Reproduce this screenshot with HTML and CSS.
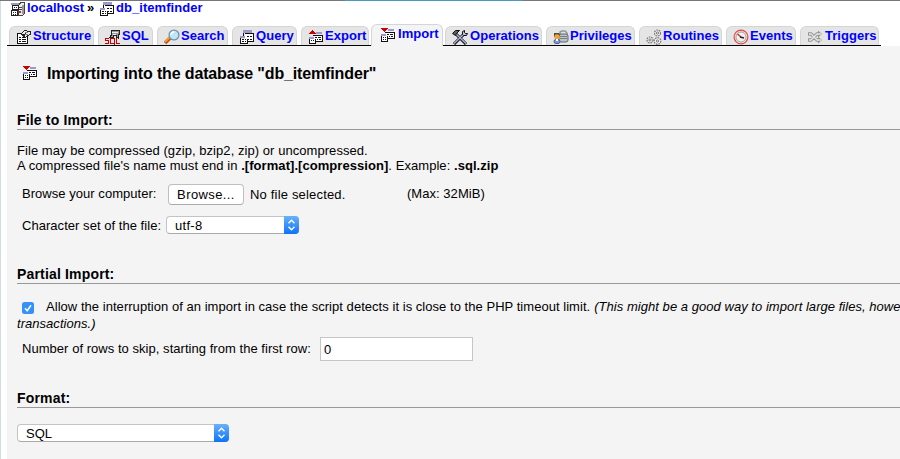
FILE: index.html
```html
<!DOCTYPE html>
<html lang="en">
<head>
<meta charset="utf-8">
<title>phpMyAdmin</title>
<link rel="stylesheet" href="styles.css">
</head>
<body>
<svg class="defs" width="0" height="0">
  <symbol id="tables" viewBox="0 0 16 16">
    <path fill="#99c" d="M4 1h9v3H4zM1 7h7v2H1z"/>
    <path fill="#fff" d="M6 5h9v8H6zM2 10h7v5H2z"/>
    <path fill="#111" d="M4 4h1v3H4zM6 4h9v1H6zM14 5h1v8h-1zM9 12h5v1H9zM8 7h2v1H8zM11 7h2v1h-2zM8 10h2v1H8zM11 10h2v1h-2zM1 9h1v6H1zM2 14h7v1H2zM8 10h1v4H8zM3 10h2v1H3zM6 10h1v1H6zM3 12h2v1H3zM6 12h1v1H6z"/>
  </symbol>
  <symbol id="import" viewBox="0 0 16 16">
    <path fill="#99c" d="M8 2h6v2H8zM1 7h5v2H1z"/>
    <path fill="#fff" d="M6 5h9v7H6zM2 9h6v5H2z"/>
    <path fill="#111" d="M5 5h10v1H5zM14 6h1v6h-1zM8 11h6v1H8zM7 7h2v1H7zM10 7h3v1h-3zM9 9h1v1H9zM11 9h2v1h-2zM1 9h1v6H1zM2 14h6v1H2zM7 9h1v5H7zM3 10h1v1H3zM5 10h1v1H5zM3 12h1v1H3zM5 12h1v1H5z"/>
    <path fill="#c00" d="M1 1h7v1H7v1H6v1H5v1H4V4H3V3H2V2H1z"/>
  </symbol>
  <symbol id="export" viewBox="0 0 16 16">
    <path fill="#99c" d="M8 3h6v2H8zM1 8h5v2H1z"/>
    <path fill="#fff" d="M6 6h9v7H6zM2 10h6v5H2z"/>
    <path fill="#111" d="M5 6h10v1H5zM14 7h1v6h-1zM8 12h6v1H8zM7 8h2v1H7zM10 8h3v1h-3zM9 10h1v1H9zM11 10h2v1h-2zM1 10h1v5H1zM2 14h6v1H2zM7 10h1v4H7zM3 11h1v1H3zM5 11h1v1H5z"/>
    <path fill="#c00" d="M4 1h1v1h1v1h1v1h1v1H1V4h1V3h1V2h1z"/>
  </symbol>
  <symbol id="server" viewBox="0 0 16 16">
    <path fill="#eee" stroke="#444" d="M9.500 2.500l2-1h3v11l-2 2h-4v-10z"/>
    <path fill="#999" d="M12 4h2v9h-2z"/>
    <path stroke="#444" d="M9 6.500h3M9 8.500h3"/>
    <path fill="#d22" d="M9 10h2v2H9z"/>
    <path fill="#99c" d="M1 2h8v2H1z"/>
    <path fill="#fff" stroke="#222" d="M2.500 4.500h6v4h-6zM1.500 9.500h6v5h-6z"/>
    <path stroke="#222" d="M4 6.500h1M6 6.500h1M3 11.500h1M5 11.500h1M3 13.500h1M5 13.500h1"/>
  </symbol>
  <symbol id="structure" viewBox="0 0 16 16">
    <path fill="#fff" stroke="#111" d="M1.500 4.500h10v10h-10z"/>
    <path stroke="#111" d="M3 8.500h2M6 8.500h4M3 10.500h2M6 10.500h4M3 12.500h2M6 12.500h4"/>
    <path fill="#eee" stroke="#222" d="M5.500 4.500l3-3h2l1 1h3v3l-3 1-2 2-2-1 1-2-2 1z"/>
    <path stroke="#888" d="M9 3.500h3M9 5.500h3"/>
  </symbol>
  <symbol id="sql" viewBox="0 0 16 16">
    <path fill="#999" stroke="#222" d="M6.500 1.500h8v4h-1v3h-2v-2h-3v2h-3v-2h1z"/>
    <path fill="none" stroke="#eee" d="M7 3.500h6M8 5.500h3"/>
    <path fill="none" stroke="#222" d="M11.500 8v3M13.500 7v3M4 8.500h2"/>
    <path fill="none" stroke="#c00" d="M4 9.500H.5v2h3v3H0M9.500 15.500v-6h-4v5h4M11.500 9v5.500H15"/>
  </symbol>
  <symbol id="search" viewBox="0 0 16 16">
    <path stroke="#b54d10" stroke-width="3.500" d="M1 14l5-5"/>
    <path stroke="#f99a31" stroke-width="2" d="M1 13l5-5"/>
    <circle cx="10" cy="6" r="4.900" fill="#bce7fa" stroke="#7791ac" stroke-width="1.300"/>
    <path fill="none" stroke="#fff" stroke-width="1.500" d="M7 6q0-3 3-3"/>
  </symbol>
  <symbol id="tools" viewBox="0 0 16 16">
    <path stroke="#111" stroke-width="3" d="M3 4l11 11M13 4L2 15"/>
    <path stroke="#aab3da" stroke-width="1.400" d="M4 5l10 9.500M12 5L2 14.500"/>
    <path fill="#596056" stroke="#111" d="M.5 4.500l3-3h4l-3 3-1 2z"/>
    <path fill="#bcc2de" stroke="#111" d="M10.500 5.500v-3l2-1v2l1 1h2l-1 2h-3z"/>
  </symbol>
  <symbol id="privileges" viewBox="0 0 16 16">
    <path fill="none" stroke="#8f969b" stroke-width="1.500" d="M7 6V3l2-1h3l2 2v3"/>
    <rect x="6" y="5" width="9" height="8" rx="2" fill="#b9c4ca" stroke="#5d666b"/>
    <path stroke="#778187" d="M7 7.500h7M7 9.500h7"/>
    <path fill="#4b4949" d="M1 4h5l1 2-1 2H1z"/>
    <circle cx="4" cy="8" r="2.700" fill="#f7a32a"/>
    <rect x="1" y="10.500" width="6" height="4" rx="2" fill="#7d9adf" stroke="#4963a2"/>
    <path fill="#fff" d="M3 10h2v2H3z"/>
  </symbol>
  <symbol id="routines" viewBox="0 0 16 16">
    <g fill="#eee" stroke="#777" stroke-width="1.200" stroke-dasharray="1.700 .8">
      <circle cx="11.500" cy="4" r="3"/><circle cx="4" cy="11" r="3"/><circle cx="11.500" cy="12" r="3.300"/>
    </g>
    <g fill="#fff" stroke="#777"><circle cx="11.500" cy="4" r="1.100"/><circle cx="4" cy="11" r="1.100"/><circle cx="11.500" cy="12" r="1.100"/></g>
  </symbol>
  <symbol id="events" viewBox="0 0 16 16">
    <circle cx="8" cy="8" r="6.900" fill="#f7dede" stroke="#e14a4a" stroke-width="1.200"/>
    <circle cx="8" cy="8" r="5" fill="#eef1ee" stroke="#a3a3a3"/>
    <path stroke="#c33" stroke-width="1.500" d="M4.500 5L8 8"/>
    <path stroke="#222" stroke-width="1.700" d="M7 8l4 1"/>
  </symbol>
  <symbol id="triggers" viewBox="0 0 16 16">
    <path fill="none" stroke="#929692" stroke-width="3.300" d="M1 5h3l6 6h3M1 11h3l6-6h3"/>
    <path fill="#929692" d="M11 1.500l4 3.500-4 3.500zM11 7.500l4 3.500-4 3.500z"/>
    <path fill="none" stroke="#e5e7e5" stroke-width="1.300" d="M2 5h2l6 6h4M2 11h2l6-6h4"/>
  </symbol>
  <symbol id="arrows" viewBox="0 0 15 18">
    <path fill="none" stroke="#fff" stroke-width="1.400" d="M4.500 7.300l3-3 3 3M4.500 10.700l3 3 3-3"/>
  </symbol>
</svg>
<div class="strip"><div class="strip-active"></div></div>
<div class="frame">
  <nav class="crumbs">
    <a class="crumb"><svg class="icon crisp"><use href="#server"/></svg><span class="c-host">localhost</span></a>
    <span class="sep">»</span>
    <a class="crumb"><svg class="icon crisp"><use href="#tables"/></svg><span class="c-db">db_itemfinder</span></a>
  </nav>
  <ul class="tabs">
    <li class="tab structure"><svg class="icon crisp"><use href="#structure"/></svg><a>Structure</a></li>
    <li class="tab sql"><svg class="icon crisp"><use href="#sql"/></svg><a>SQL</a></li>
    <li class="tab search"><svg class="icon"><use href="#search"/></svg><a>Search</a></li>
    <li class="tab query"><svg class="icon crisp"><use href="#tables"/></svg><a>Query</a></li>
    <li class="tab export"><svg class="icon crisp"><use href="#export"/></svg><a>Export</a></li>
    <li class="tab import active"><svg class="icon crisp"><use href="#import"/></svg><a>Import</a></li>
    <li class="tab operations"><svg class="icon"><use href="#tools"/></svg><a>Operations</a></li>
    <li class="tab privileges"><svg class="icon"><use href="#privileges"/></svg><a>Privileges</a></li>
    <li class="tab routines"><svg class="icon"><use href="#routines"/></svg><a>Routines</a></li>
    <li class="tab events"><svg class="icon"><use href="#events"/></svg><a>Events</a></li>
    <li class="tab triggers"><svg class="icon"><use href="#triggers"/></svg><a>Triggers</a></li>
  </ul>
  <main class="content">
    <h1><svg class="icon crisp"><use href="#import"/></svg><span>Importing into the database "db_itemfinder"</span></h1>
    <section class="file">
      <h2>File to Import:</h2>
      <p class="info">File may be compressed (gzip, bzip2, zip) or uncompressed.<br>A compressed file's name must end in <b>.[format].[compression]</b>. Example: <b>.sql.zip</b></p>
      <div class="row browse"><label>Browse your computer:</label><button type="button">Browse...</button><span class="chosen">No file selected.</span><span class="max">(Max: 32MiB)</span></div>
      <div class="row charset"><label>Character set of the file:</label><div class="select small"><span>utf-8</span><svg><use href="#arrows"/></svg></div></div>
    </section>
    <section class="partial">
      <h2>Partial Import:</h2>
      <div class="allow"><svg class="check" viewBox="0 0 12 12"><path d="M3 6.200l2.200 2.500L9 3.300"/></svg><span class="a1">Allow the interruption of an import in case the script detects it is close to the PHP timeout limit.</span><em class="a2">(This might be a good way to import large files, howe</em></div>
      <em class="rest">transactions.)</em>
      <div class="row skip"><label>Number of rows to skip, starting from the first row:</label><input type="text" value="0"></div>
    </section>
    <section class="format">
      <h2>Format:</h2>
      <div class="select wide"><span>SQL</span><svg><use href="#arrows"/></svg></div>
    </section>
  </main>
</div>
</body>
</html>
```
FILE: styles.css
```css
* { box-sizing: border-box; }
body {
  margin: 0;
  height: 459px;
  overflow: hidden;
  background: #fff;
  color: #000;
  font: 13px/15px "Liberation Sans", Arial, sans-serif;
  letter-spacing: .04px;
  white-space: nowrap;
}
.defs { position: absolute; }
.strip { height: 1px; background: #777; }
.strip-active { width: 178px; height: 1px; margin-left: 345px; background: #4a9abe; }
.frame { height: 458px; padding-left: 6px; border-left: 1px solid #d2dce5; }
.icon { width: 16px; height: 16px; flex: none; }
.crisp { shape-rendering: crispEdges; }
.crumbs { display: flex; height: 25px; padding-left: 3px; font-weight: bold; line-height: 14px; }
.crumb { display: flex; color: #00f; }
.c-host { margin-left: 1px; letter-spacing: 0; }
.c-db { margin-left: 1px; }
.sep { width: 12px; margin: 0 0 0 3px; }
.tabs { display: flex; align-items: flex-end; width: 874px; height: 20px; margin: 0; padding: 0 0 0 2px; list-style: none; background: linear-gradient(#000, #000) 0 100% / 100% 1px no-repeat; }
.tab {
  display: flex;
  height: 19px;
  margin: 0 4px 1px 0;
  padding-left: 6px;
  border: 1px solid #d5d5d5;
  border-bottom: 0;
  border-radius: 6px 6px 0 0;
  background: #e5e5e5;
  color: #00f;
  font-weight: bold;
  line-height: 17px;
  flex: none;
}
.tab .icon { margin-top: 2px; }
.tab a { margin-left: 1px; }
.structure { width: 85px; }
.sql { width: 55px; }
.search { width: 71px; }
.query { width: 65px; }
.export { width: 68px; margin-right: 2px; }
.import { width: 72px; }
.operations { width: 97px; }
.privileges { width: 89px; }
.routines { width: 83px; }
.events { width: 70px; }
.triggers { width: 79px; margin-right: 0; }
.operations a, .import a, .triggers a { margin-left: 2px; }
.tab.active { height: 22px; margin: 0 2px 0 0; padding-left: 8px; background: #f4f4f4; line-height: 18px; }
.content { height: 413px; padding: 0 0 0 10px; background: #f4f4f4; overflow: hidden; }
h1 { display: flex; align-items: center; height: 18px; margin: 18px 0 0 5px; font-size: 16px; line-height: 18px; letter-spacing: -.14px; }
h1 .icon { margin-right: 9px; }
h1 span { margin-top: 2px; }
h2 { height: 18px; margin: 0; border-bottom: 1px solid #999; font-size: 14px; line-height: 16px; letter-spacing: .17px; }
.file { margin-top: 30px; height: 154px; }
.partial { height: 124px; }
.info { margin: 13px 0 0; letter-spacing: .055px; }
.row { display: flex; padding-left: 5px; }
.browse { height: 22px; margin-top: 10px; }
.browse label { width: 146px; margin-top: 3px; }
button { width: 76px; height: 21px; margin: 1px 0 0; padding: 0; border: 1px solid #bfbfbf; border-bottom-color: #aaa; border-radius: 4px; background: #fff; color: #000; font: 13px/19px "Liberation Sans", Arial, sans-serif; letter-spacing: .4px; }
.chosen { width: 157px; margin: 4px 0 0 6px; letter-spacing: .18px; }
.max { margin-top: 3px; }
.charset { margin-top: 11px; }
.charset label { width: 144px; margin-top: 2px; }
.select { display: flex; justify-content: space-between; height: 18px; border: 1px solid #c4c4c4; border-bottom-color: #aaa; border-right: 0; border-radius: 4px; background: #fff; line-height: 18px; padding-left: 8px; letter-spacing: .3px; }
.select svg { width: 15px; height: 18px; margin-top: -1px; border-radius: 0 4px 4px 0; background: linear-gradient(#69b1fa, #0d73f8); flex: none; }
.small { width: 133px; }
.wide { width: 212px; margin-top: 16px; letter-spacing: 0; }
.allow { display: flex; height: 16px; margin-top: 15px; padding-left: 5px; }
.check { width: 12px; height: 12px; margin: 3px 12px 0 0; border-radius: 2.500px; background: #3491f8; flex: none; }
.check path { fill: none; stroke: #fff; stroke-width: 1.500; }
.a1 { margin-right: 4px; }
.rest { display: block; height: 16px; margin-top: 1px; }
.skip { margin-top: 5px; }
.skip label { width: 298px; margin-top: 4px; }
.skip input { width: 153px; height: 24px; margin: 0; padding: 0 3px; border: 1px solid #c6c6c6; background: #fff; font: 13px "Liberation Sans", Arial, sans-serif; }
```
